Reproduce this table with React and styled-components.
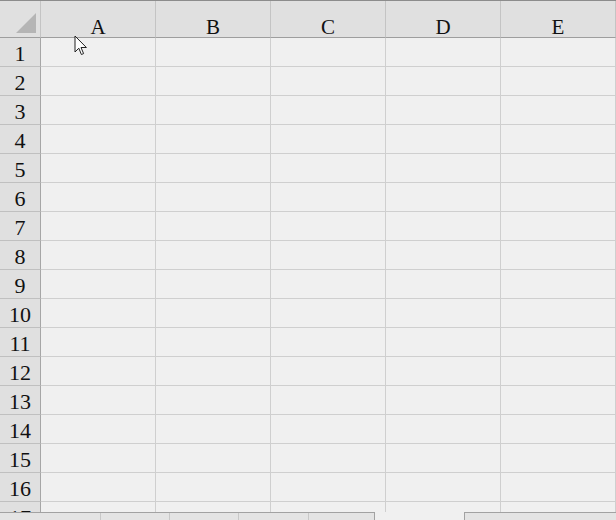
import React from 'react';
import styled, { createGlobalStyle } from 'styled-components';

const GlobalStyle = createGlobalStyle`
  html, body {
    margin: 0;
    padding: 0;
    background: #f0f0f0;
    overflow: hidden;
  }
`;

const COLS = ['A', 'B', 'C', 'D', 'E'];
const ROWS = Array.from({ length: 17 }, (_, i) => i + 1);

const Page = styled.div`
  position: relative;
  width: 616px;
  height: 520px;
  display: flex;
  flex-direction: column;
  background: #f0f0f0;
  font-family: "Liberation Serif", "Times New Roman", serif;
  overflow: hidden;
`;

const Sheet = styled.div`
  height: 512px;
  overflow: hidden;
  border-top: 1px solid #8c8c8c;
  box-sizing: border-box;
`;

const Row = styled.div`
  display: grid;
  grid-template-columns: 41px repeat(5, 115px);
  grid-template-rows: ${(p) => (p.$header ? 37 : 29)}px;
  height: ${(p) => (p.$header ? 37 : 29)}px;
  line-height: 1;
`;

const Corner = styled.div`
  position: relative;
  background: #e0e0e0;
  border-right: 1px solid #c4c4c4;
  border-bottom: 1px solid #9e9e9e;
`;

const Triangle = styled.div`
  position: absolute;
  right: 4px;
  bottom: 4px;
  width: 0;
  height: 0;
  border-left: 20px solid transparent;
  border-bottom: 20px solid #b5b5b5;
`;

const ColHead = styled.div`
  display: flex;
  align-items: center;
  justify-content: center;
  background: #e0e0e0;
  border-right: 1px solid #c4c4c4;
  border-bottom: 1px solid #9e9e9e;
  font-size: 21px;
  color: #111;
  padding-top: 16px;
  box-sizing: border-box;
  overflow: hidden;
`;

const RowHead = styled.div`
  display: flex;
  align-items: center;
  justify-content: center;
  background: #e0e0e0;
  border-right: 1px solid #a6a6a6;
  border-bottom: 1px solid #c0c0c0;
  font-size: 22px;
  color: #111;
  padding-top: 3px;
  box-sizing: border-box;
  overflow: hidden;
`;

const Cell = styled.div`
  background: #f0f0f0;
  border-right: 1px solid #cfcfcf;
  border-bottom: 1px solid #cfcfcf;
`;

const BottomBar = styled.div`
  display: flex;
  height: 8px;
`;

const Tabs = styled.div`
  display: flex;
  width: 375px;
  background: #e4e4e4;
  border-top: 1px solid #a2a2a2;
  border-right: 1px solid #a2a2a2;
  box-sizing: border-box;
`;

const Tab = styled.div`
  width: ${(p) => p.$w}px;
  border-right: 1px solid #c8c8c8;
  flex-shrink: 0;
`;

const Spacer = styled.div`
  flex: 1;
  background: #f0f0f0;
`;

const HScroll = styled.div`
  width: 152px;
  background: #e4e4e4;
  border-top: 1px solid #a2a2a2;
  border-left: 1px solid #a2a2a2;
  box-sizing: border-box;
`;

const Pointer = styled.svg`
  position: absolute;
  left: 74px;
  top: 35px;
`;

export default function App() {
  return (
    <Page>
      <GlobalStyle />
      <Sheet>
        <Row $header>
          <Corner>
            <Triangle />
          </Corner>
          {COLS.map((c) => (
            <ColHead key={c}>{c}</ColHead>
          ))}
        </Row>
        {ROWS.map((r) => (
          <Row key={r}>
            <RowHead>{r}</RowHead>
            {COLS.map((c) => (
              <Cell key={c} />
            ))}
          </Row>
        ))}
      </Sheet>
      <BottomBar>
        <Tabs>
          <Tab $w={100} />
          <Tab $w={68} />
          <Tab $w={68} />
          <Tab $w={69} />
        </Tabs>
        <Spacer />
        <HScroll />
      </BottomBar>
      <Pointer width="14" height="21" viewBox="0 0 14 21">
        <path
          d="M1 1 L1 17 L4.8 13.2 L7.4 19.5 L9.6 18.6 L7 12.5 L12.4 12.5 Z"
          fill="#fff"
          stroke="#222"
          strokeWidth="1"
          strokeLinejoin="round"
        />
      </Pointer>
    </Page>
  );
}
